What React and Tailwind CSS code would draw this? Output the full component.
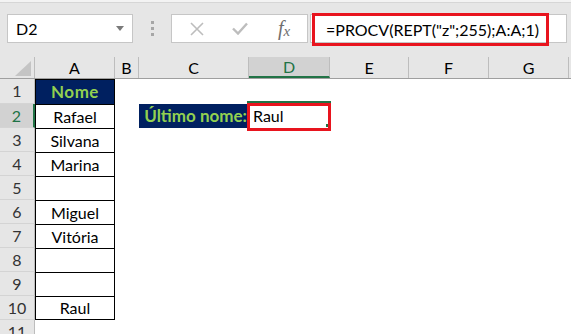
import React from "react";

const FONT = { fontFamily: "Lato, 'Open Sans', sans-serif" };

function RowHeader({ n, active }) {
  return (
    <div
      className={
        "w-[35px] shrink-0 h-full flex items-center justify-center border-b border-[#d4d4d4] text-[16px] " +
        (active
          ? "bg-[#d2d2d2] text-[#217346] border-r-2 border-r-[#217346]"
          : "bg-[#e6e6e6] text-[#333] border-r border-r-[#bdbdbd]")
      }
    >
      {n}
    </div>
  );
}

function ACell({ children, head, last }) {
  return (
    <div
      className={
        "w-[80px] shrink-0 h-full flex items-center justify-center border-l border-r border-t border-black " +
        (last ? "border-b " : "") +
        (head ? "bg-[#002060] text-[#92d050] font-bold text-[17px] tracking-[0.5px]" : "bg-white text-black text-[16px]")
      }
    >
      {children}
    </div>
  );
}

const names = ["Rafael", "Silvana", "Marina", "", "Miguel", "Vitória", "", "", "Raul"];

export default function App() {
  const cols = [
    { l: "B", w: "w-[24px]" },
    { l: "C", w: "w-[110px]" },
    { l: "D", w: "w-[81px]", active: true },
    { l: "E", w: "w-[79px]" },
    { l: "F", w: "w-[80px]" },
    { l: "G", w: "w-[80px]" },
  ];
  return (
    <div className="w-[571px] h-[334px] overflow-hidden bg-white relative" style={FONT}>
      {/* Toolbar */}
      <div className="h-[57px] bg-[#e6e6e6] border-t-[2px] border-t-[#f3f3f3] relative">
        <div className="absolute left-0 right-0 top-0 h-px bg-[#d6d6d6]" />
        <div className="flex items-start pt-[12px] pl-[7px]">
          {/* Name box */}
          <div className="w-[126px] h-[29px] bg-white border border-[#c6c6c6] flex items-center justify-between pl-[8px] pr-[8px] text-[16px] text-black">
            <span>D2</span>
            <svg width="8" height="5" viewBox="0 0 8 5">
              <path d="M0 0 L8 0 L4 5 Z" fill="#7a7a7a" />
            </svg>
          </div>
          {/* dots */}
          <div className="w-[38px] h-[29px] flex flex-col items-center justify-center gap-[3px]">
            <div className="w-[3px] h-[3px] bg-[#a6a6a6]" />
            <div className="w-[3px] h-[3px] bg-[#a6a6a6]" />
            <div className="w-[3px] h-[3px] bg-[#a6a6a6]" />
          </div>
          {/* icons box */}
          <div className="w-[137px] h-[29px] bg-white border border-[#c6c6c6] flex items-center">
            <div className="w-[47px] flex justify-center pl-[3px]">
              <svg width="14" height="14" viewBox="0 0 14 14">
                <path d="M1 1 L13 13 M13 1 L1 13" stroke="#bdbdbd" strokeWidth="1.6" />
              </svg>
            </div>
            <div className="w-[42px] flex justify-center">
              <svg width="16" height="13" viewBox="0 0 16 13">
                <path d="M1 6.5 L6 11.5 L15 1.5" stroke="#bdbdbd" strokeWidth="2.4" fill="none" />
              </svg>
            </div>
            <div
              className="w-[44px] flex justify-center text-[20px] italic text-[#6f6f6f] leading-none pl-[2px]"
              style={{ fontFamily: "'Liberation Serif', serif" }}
            >
              <span>f</span>
              <span className="text-[15px] mt-[6px]">x</span>
            </div>
          </div>
          {/* formula input */}
          <div className="ml-[2px] w-[257px] h-[29px] bg-white border border-[#c6c6c6] relative">
            <div className="absolute left-[1px] top-[-2px] w-[237px] h-[33px] border-[3px] border-[#e8141e] flex items-center pl-[11px] text-[16px] text-black whitespace-nowrap">
              =PROCV(REPT("z";255);A:A;1)
            </div>
          </div>
        </div>
      </div>

      {/* Column headers */}
      <div className="flex h-[22px] bg-[#e6e6e6] border-b border-[#9f9f9f]">
        <div className="w-[35px] shrink-0 h-full border-r border-[#bdbdbd] relative">
          <svg className="absolute right-[3px] bottom-[2px]" width="16" height="15" viewBox="0 0 16 15">
            <path d="M16 0 L16 15 L0 15 Z" fill="#c4c4c4" />
          </svg>
        </div>
        <div className="w-[80px] shrink-0 h-full flex items-center justify-center border-r border-[#bdbdbd] text-[16px] text-black">
          A
        </div>
        {cols.map((c) => (
          <div
            key={c.l}
            className={
              c.w +
              " shrink-0 h-full flex items-center justify-center border-r border-[#bdbdbd] text-[16px] " +
              (c.active
                ? "bg-[#d2d2d2] text-[#217346] border-b-2 border-b-[#217346]"
                : "text-black")
            }
          >
            {c.l}
          </div>
        ))}
        <div className="flex-1" />
      </div>

      {/* Row 1 */}
      <div className="flex h-[25px]">
        <RowHeader n={1} />
        <ACell head>Nome</ACell>
      </div>

      {names.map((nm, i) => {
        const r = i + 2;
        return (
          <div key={r} className="flex h-[24px]">
            <RowHeader n={r} active={r === 2} />
            <ACell last={r === 10}>{nm}</ACell>
            {r === 2 && (
              <>
                <div className="w-[24px] shrink-0" />
                <div className="w-[110px] shrink-0 h-full bg-[#002060] text-[#92d050] font-bold text-[17px] flex items-center justify-end pr-[2px] whitespace-nowrap">
                  Último nome:
                </div>
                <div className="w-[81px] shrink-0 h-full relative text-[16px] text-black flex items-center pl-[4px]">
                  <div className="absolute left-[-2px] right-[-1px] top-[-3px] h-[2px] bg-[#217346]" />
                  <div className="absolute right-[1px] top-0 bottom-[3px] w-[1px] bg-[#217346]" />
                  <div className="absolute right-[1px] bottom-[1px] w-[3px] h-[3px] bg-[#217346]" />
                  <div className="absolute left-[-2px] right-[-1px] top-[-1px] bottom-[-3px] border-[3px] border-[#e8141e]" />
                  <span className="relative">Raul</span>
                </div>
              </>
            )}
          </div>
        );
      })}

      <div className="flex h-[24px]">
        <RowHeader n={11} />
      </div>
    </div>
  );
}
